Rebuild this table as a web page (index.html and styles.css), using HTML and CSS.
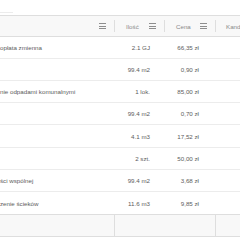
FILE: index.html
```html
<!DOCTYPE html>
<html lang="pl">
<head>
<meta charset="utf-8">
<link rel="stylesheet" href="styles.css">
</head>
<body>
<div class="topbar"><span class="stub"></span></div>
<div class="grid">
  <div class="row head">
    <div class="cell c1"><span class="label"></span><span class="menu"><i></i><i></i><i></i></span></div>
    <div class="cell c2"><span class="label">Ilość</span><span class="menu"><i></i><i></i><i></i></span></div>
    <div class="cell c3"><span class="label">Cena</span><span class="menu"><i></i><i></i><i></i></span></div>
    <div class="cell c4"><span class="label">Kandl</span></div>
  </div>
  <div class="row"><div class="cell c1">opłata zmienna</div><div class="cell c2 num">2.1 GJ</div><div class="cell c3 num">66,35 zł</div><div class="cell c4"></div></div>
  <div class="row"><div class="cell c1"></div><div class="cell c2 num">99.4 m2</div><div class="cell c3 num">0,90 zł</div><div class="cell c4"></div></div>
  <div class="row"><div class="cell c1">nie odpadami komunalnymi</div><div class="cell c2 num">1 lok.</div><div class="cell c3 num">85,00 zł</div><div class="cell c4"></div></div>
  <div class="row"><div class="cell c1"></div><div class="cell c2 num">99.4 m2</div><div class="cell c3 num">0,70 zł</div><div class="cell c4"></div></div>
  <div class="row tall"><div class="cell c1"></div><div class="cell c2 num">4.1 m3</div><div class="cell c3 num">17,52 zł</div><div class="cell c4"></div></div>
  <div class="row"><div class="cell c1"></div><div class="cell c2 num">2 szt.</div><div class="cell c3 num">50,00 zł</div><div class="cell c4"></div></div>
  <div class="row"><div class="cell c1">ści wspólnej</div><div class="cell c2 num">99.4 m2</div><div class="cell c3 num">3,68 zł</div><div class="cell c4"></div></div>
  <div class="row tall"><div class="cell c1">zenie ścieków</div><div class="cell c2 num">11.6 m3</div><div class="cell c3 num">9,85 zł</div><div class="cell c4"></div></div>
  <div class="row foot"><div class="cell c1"></div><div class="cell c2"></div><div class="cell c3"></div><div class="cell c4"></div></div>
</div>
</body>
</html>
```
FILE: styles.css
```css
html, body {
  margin: 0;
  padding: 0;
  background: #fff;
}
body {
  width: 240px;
  height: 240px;
  overflow: hidden;
  font-family: "Liberation Sans", Arial, sans-serif;
  font-size: 6.2px;
  color: #5c5c5c;
}
.topbar {
  height: 15px;
  display: flex;
  align-items: flex-start;
}
.stub {
  display: block;
  width: 13px;
  height: 1px;
  margin-top: 12px;
  background: #ececec;
}
.grid {
  width: 240px;
  overflow: hidden;
}
.row {
  display: grid;
  grid-template-columns: 115px 50px 51px 24px;
  height: 21px;
  border-bottom: 1px solid #ececec;
  align-items: center;
}
.row.tall {
  height: 22px;
}
.cell {
  white-space: nowrap;
  overflow: hidden;
  height: 100%;
  display: flex;
  align-items: center;
}
.num {
  justify-content: flex-end;
}
.c2.num { padding-right: 15px; }
.c3.num { padding-right: 17px; }
.head {
  background: #f8f8f8;
  border-top: 1px solid #dedede;
  border-bottom: 1px solid #dedede;
  height: 20px;
  color: #8a8a8a;
}
.head .cell {
  position: relative;
  justify-content: space-between;
  padding: 0 9px 0 11px;
  box-sizing: border-box;
}
.head .c1::after,
.head .c2::after,
.head .c3::after {
  content: "";
  position: absolute;
  right: 0;
  top: 4px;
  bottom: 4px;
  width: 1px;
  background: #dedede;
}
.head .c4 {
  padding: 0 0 0 10px;
  justify-content: flex-start;
}
.menu {
  display: flex;
  flex-direction: column;
  gap: 1.5px;
  width: 7px;
}
.menu i {
  display: block;
  height: 1px;
  background: #8e8e8e;
}
.foot {
  background: #f8f8f8;
  border-top: 1px solid #dedede;
  border-bottom: 1px solid #dedede;
  height: 21px;
  margin-top: -1px;
}
.foot .c1,
.foot .c3 {
  border-right: 1px solid #dedede;
  box-sizing: border-box;
}
```
